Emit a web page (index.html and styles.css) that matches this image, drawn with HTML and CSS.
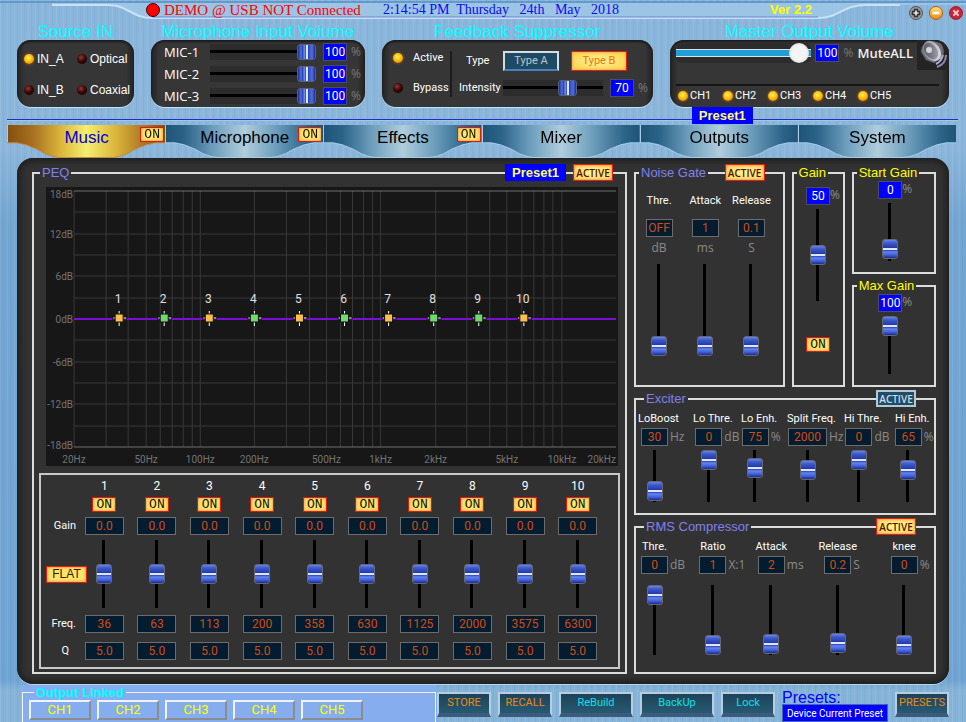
FILE: index.html
```html
<!DOCTYPE html>
<html lang="en">
<head>
    <meta charset="UTF-8">
    <meta name="viewport" content="width=device-width, initial-scale=1.0">
    <title>Audio Processor</title>
    <link rel="stylesheet" href="styles.css">
</head>
<body>
    <header class="topbar">
        <svg class="topbar-shape" viewBox="0 0 966 23" preserveAspectRatio="none" aria-hidden="true">
            <path d="M0 2H966" stroke="#3f7dbb" stroke-width="1"/>
            <path d="M52 5H108C128 5 132 17 152 17H818C840 17 842 5 866 5H966V3H52Z" fill="#9cc4e4"/>
            <path d="M52 5H108C128 5 132 18 152 18H818C840 18 842 5 866 5H900" fill="none" stroke="#c9e2f6" stroke-width="2"/>
            <path d="M152 17H818" stroke="#6a86d8" stroke-width="1"/>
        </svg>
        <span class="status-dot"></span>
        <span class="status">DEMO @ USB NOT Connected</span>
        <time class="clock">2:14:54 PM&nbsp; Thursday&nbsp;&nbsp; 24th&nbsp;&nbsp; May&nbsp;&nbsp; 2018</time>
        <span class="version">Ver 2.2</span>
        <div class="window-buttons">
            <button class="win win-max" aria-label="Maximize"><svg viewBox="0 0 14 14"><path d="M7 2V12M2 7H12" stroke="#333" stroke-width="5"/><path d="M7 4V10M4 7H10" stroke="#e8e8e8" stroke-width="2"/></svg></button>
            <button class="win win-min" aria-label="Minimize"><svg viewBox="0 0 14 14"><path d="M3 7H11" stroke="#fff" stroke-width="3"/></svg></button>
            <button class="win win-close" aria-label="Close"><svg viewBox="0 0 14 14"><path d="M4 4L10 10M10 4L4 10" stroke="#f4d0d0" stroke-width="2"/></svg></button>
        </div>
    </header>

    <div class="inputs">
        <section class="group">
            <h2>Source IN</h2>
            <div class="box source">
                <label><input type="radio" class="led" name="source" checked>IN_A</label>
                <label><input type="radio" class="led" name="source">Optical</label>
                <label><input type="radio" class="led" name="source">IN_B</label>
                <label><input type="radio" class="led" name="source">Coaxial</label>
            </div>
        </section>

        <section class="group">
            <h2>Microphone Input Volume</h2>
            <div class="box mics">
                <div class="mic"><label for="mic1">MIC-1</label><input type="range" class="hslider" id="mic1" value="100"><input type="text" class="value blue" aria-label="MIC-1 volume" value="100"><span class="unit">%</span></div>
                <div class="mic"><label for="mic2">MIC-2</label><input type="range" class="hslider" id="mic2" value="100"><input type="text" class="value blue" aria-label="MIC-2 volume" value="100"><span class="unit">%</span></div>
                <div class="mic"><label for="mic3">MIC-3</label><input type="range" class="hslider" id="mic3" value="100"><input type="text" class="value blue" aria-label="MIC-3 volume" value="100"><span class="unit">%</span></div>
            </div>
        </section>

        <section class="group">
            <h2>Feedback Suppressor</h2>
            <div class="box feedback">
                <div class="modes">
                    <label><input type="radio" class="led" name="feedback" checked>Active</label>
                    <label><input type="radio" class="led" name="feedback">Bypass</label>
                </div>
                <div class="feedback-settings">
                    <span>Type</span>
                    <div class="types">
                        <button class="btn">Type A</button>
                        <button class="btn lit">Type B</button>
                    </div>
                    <label for="intensity">Intensity</label>
                    <div class="intensity"><input type="range" class="hslider" id="intensity" value="68"><input type="text" class="value blue" aria-label="Intensity value" value="70"><span class="unit">%</span></div>
                </div>
            </div>
        </section>

        <section class="group">
            <h2>Master Output Volume</h2>
            <div class="box master">
                <div class="master-row">
                    <input type="range" class="master-slider" aria-label="Master volume" value="98">
                    <input type="text" class="value blue" aria-label="Master volume value" value="100">
                    <span class="unit">%</span>
                    <button class="mute">MuteALL
                        <svg viewBox="0 0 30 30" aria-hidden="true">
                            <defs>
                                <linearGradient id="cone" x1="0" y1="0" x2="1" y2="1">
                                    <stop offset="0" stop-color="#4c4c54"/>
                                    <stop offset="1" stop-color="#a8a8b4"/>
                                </linearGradient>
                                <linearGradient id="rim" x1="0" y1="0" x2="1" y2="1">
                                    <stop offset="0" stop-color="#77777f"/>
                                    <stop offset="1" stop-color="#ececf4"/>
                                </linearGradient>
                            </defs>
                            <path d="M3 12C3 5 8 1 15 1L22 3C26 7 27 13 24 18L16 23L8 20Z" fill="#6e6e76"/>
                            <ellipse cx="14" cy="11" rx="8" ry="11" transform="rotate(-35 14 11)" fill="url(#rim)"/>
                            <ellipse cx="13" cy="11" rx="6" ry="9" transform="rotate(-35 13 11)" fill="url(#cone)"/>
                            <circle cx="11" cy="10" r="3" fill="#d4d4de"/>
                            <path d="M18 24C22 22 24 19 25 15" fill="none" stroke="#b4acd4" stroke-width="2"/>
                            <path d="M19 27C25 25 28 21 28 15" fill="none" stroke="#8e84b8" stroke-width="2"/>
                        </svg>
                    </button>
                </div>
                <div class="channels">
                    <label><input type="checkbox" class="led" checked>CH1</label>
                    <label><input type="checkbox" class="led" checked>CH2</label>
                    <label><input type="checkbox" class="led" checked>CH3</label>
                    <label><input type="checkbox" class="led" checked>CH4</label>
                    <label><input type="checkbox" class="led" checked>CH5</label>
                </div>
            </div>
        </section>
    </div>

    <div class="rule"><span class="preset-tag">Preset1</span></div>

    <nav class="tabs">
        <div class="tab current"><a href="#music">Music</a><button class="on">ON</button></div>
        <div class="tab"><a href="#microphone">Microphone</a><button class="on">ON</button></div>
        <div class="tab"><a href="#effects">Effects</a><button class="on">ON</button></div>
        <div class="tab"><a href="#mixer">Mixer</a></div>
        <div class="tab"><a href="#outputs">Outputs</a></div>
        <div class="tab"><a href="#system">System</a></div>
    </nav>

    <main class="panel">
        <fieldset class="peq">
            <legend>PEQ</legend>
            <div class="corner"><span class="preset-tag">Preset1</span><button class="active">ACTIVE</button></div>
            <svg class="graph" id="graph" viewBox="0 0 571 279" preserveAspectRatio="none" role="img" aria-label="Equalizer response"></svg>
            <div class="bands" id="bands">
                <div class="band-labels">
                    <span></span>
                    <span></span>
                    <span>Gain</span>
                    <button class="flat">FLAT</button>
                    <span>Freq.</span>
                    <span class="q">Q</span>
                </div>
            </div>
        </fieldset>

        <div class="dynamics">
            <div class="upper">
                <fieldset class="gate">
                    <legend>Noise Gate</legend>
                    <div class="corner"><button class="active">ACTIVE</button></div>
                    <div class="gate-col"><label for="ng-thre">Thre.</label><input type="text" class="value" id="ng-thre" value="OFF"><span class="unit">dB</span><input type="range" class="vslider long" aria-label="Gate threshold" value="0"></div>
                    <div class="gate-col"><label for="ng-attack">Attack</label><input type="text" class="value" id="ng-attack" value="1"><span class="unit">ms</span><input type="range" class="vslider long" aria-label="Gate attack" value="0"></div>
                    <div class="gate-col"><label for="ng-release">Release</label><input type="text" class="value" id="ng-release" value="0.1"><span class="unit">S</span><input type="range" class="vslider long" aria-label="Gate release" value="0"></div>
                </fieldset>
                <fieldset class="gain">
                    <legend>Gain</legend>
                    <div class="level"><input type="text" class="value blue" aria-label="Gain" value="50"><span class="unit">%</span></div>
                    <input type="range" class="vslider long" aria-label="Gain slider" value="50">
                    <button class="on">ON</button>
                </fieldset>
                <div class="gain-pair">
                    <fieldset class="gain">
                        <legend>Start Gain</legend>
                        <div class="level"><input type="text" class="value blue" aria-label="Start gain" value="0"><span class="unit">%</span></div>
                        <input type="range" class="vslider" aria-label="Start gain slider" value="4">
                    </fieldset>
                    <fieldset class="gain">
                        <legend>Max Gain</legend>
                        <div class="level"><input type="text" class="value blue" aria-label="Max gain" value="100"><span class="unit">%</span></div>
                        <input type="range" class="vslider" aria-label="Max gain slider" value="100">
                    </fieldset>
                </div>
            </div>

            <fieldset class="exciter">
                <legend>Exciter</legend>
                <div class="corner"><button class="active off">ACTIVE</button></div>
                <div class="knob"><label for="ex-boost">LoBoost</label><input type="text" class="value" id="ex-boost" value="30"><span class="unit">Hz</span><input type="range" class="vslider" aria-label="LoBoost slider" value="4"></div>
                <div class="knob"><label for="ex-lothre">Lo Thre.</label><input type="text" class="value" id="ex-lothre" value="0"><span class="unit">dB</span><input type="range" class="vslider" aria-label="Lo threshold slider" value="100"></div>
                <div class="knob"><label for="ex-loenh">Lo Enh.</label><input type="text" class="value" id="ex-loenh" value="75"><span class="unit">%</span><input type="range" class="vslider" aria-label="Lo enhance slider" value="75"></div>
                <div class="knob wide"><label for="ex-split">Split Freq.</label><input type="text" class="value" id="ex-split" value="2000"><span class="unit">Hz</span><input type="range" class="vslider" aria-label="Split frequency slider" value="68"></div>
                <div class="knob"><label for="ex-hithre">Hi Thre.</label><input type="text" class="value" id="ex-hithre" value="0"><span class="unit">dB</span><input type="range" class="vslider" aria-label="Hi threshold slider" value="100"></div>
                <div class="knob"><label for="ex-hienh">Hi Enh.</label><input type="text" class="value" id="ex-hienh" value="65"><span class="unit">%</span><input type="range" class="vslider" aria-label="Hi enhance slider" value="67"></div>
            </fieldset>

            <fieldset class="compressor">
                <legend>RMS Compressor</legend>
                <div class="corner"><button class="active">ACTIVE</button></div>
                <div class="knob"><label for="rc-thre">Thre.</label><input type="text" class="value" id="rc-thre" value="0"><span class="unit">dB</span><input type="range" class="vslider" aria-label="Compressor threshold slider" value="100"></div>
                <div class="knob"><label for="rc-ratio">Ratio</label><input type="text" class="value" id="rc-ratio" value="1"><span class="unit">X:1</span><input type="range" class="vslider" aria-label="Ratio slider" value="0"></div>
                <div class="knob"><label for="rc-attack">Attack</label><input type="text" class="value" id="rc-attack" value="2"><span class="unit">ms</span><input type="range" class="vslider" aria-label="Compressor attack slider" value="2"></div>
                <div class="knob"><label for="rc-release">Release</label><input type="text" class="value" id="rc-release" value="0.2"><span class="unit">S</span><input type="range" class="vslider" aria-label="Compressor release slider" value="4"></div>
                <div class="knob"><label for="rc-knee">knee</label><input type="text" class="value" id="rc-knee" value="0"><span class="unit">%</span><input type="range" class="vslider" aria-label="Knee slider" value="0"></div>
            </fieldset>
        </div>
    </main>

    <footer class="footer">
        <div class="linked-area">
            <fieldset class="linked">
                <legend>Output Linked</legend>
                <button>CH1</button>
                <button>CH2</button>
                <button>CH3</button>
                <button>CH4</button>
                <button>CH5</button>
            </fieldset>
        </div>
        <div class="actions">
            <button class="btn deep orange">STORE</button>
            <button class="btn deep orange">RECALL</button>
            <button class="btn deep cyan large">ReBuild</button>
            <button class="btn deep cyan large">BackUp</button>
            <button class="btn deep cyan">Lock</button>
            <div class="presets">
                <label for="preset">Presets:</label>
                <input type="text" id="preset" value="Device Current Preset">
            </div>
            <button class="btn deep orange">PRESETS</button>
        </div>
    </footer>

    <script>
        const freqs = [36, 63, 113, 200, 358, 630, 1125, 2000, 3575, 6300];
        const nodeColors = ['#ffc04a', '#6fdc6a', '#ffc04a', '#6fdc6a', '#ffc04a', '#6fdc6a', '#ffc04a', '#6fdc6a', '#6fdc6a', '#ffc04a'];

        // Equalizer bands
        const bands = document.getElementById('bands');
        freqs.forEach((freq, i) => {
            const n = i + 1;
            const band = document.createElement('div');
            band.className = 'band';
            band.innerHTML = `
                <span>${n}</span>
                <button class="on">ON</button>
                <input type="text" class="value" aria-label="Band ${n} gain" value="0.0">
                <input type="range" class="vslider" aria-label="Band ${n} gain slider" value="50">
                <input type="text" class="value" aria-label="Band ${n} frequency" value="${freq}">
                <input type="text" class="value" aria-label="Band ${n} Q" value="5.0">
            `;
            bands.appendChild(band);
        });

        // Graph: log frequency from 20 Hz to 20 kHz, gain from -18 to 18 dB
        const left = 28, right = 569, top_ = 4, bottom = 260;
        const xOf = f => Math.round(left + (right - left) * Math.log10(f / 20) / 3);
        const yOf = db => Math.round(top_ + (bottom - top_) * (18 - db) / 36);
        let svg = '';
        for (let db = -15; db <= 15; db += 3) {
            svg += `<path class="grid-line" d="M${left} ${yOf(db)}H${right}"/>`;
        }
        for (let decade = 10; decade <= 10000; decade *= 10) {
            for (let k = 1; k < 10; k++) {
                const f = decade * k;
                if (f >= 20 && f <= 10000) {
                    svg += `<path class="grid-line" d="M${xOf(f)} ${top_}V${bottom}"/>`;
                }
            }
        }
        svg += `<path class="edge" d="M${left} ${top_}H${right}M${left} ${bottom}H${right}"/>`;
        svg += `<path class="curve" d="M${left} 132H${right}"/>`;
        for (let db = -18; db <= 18; db += 6) {
            const y = db === 18 ? 11 : yOf(db) + 4;
            svg += `<text class="axis" x="27" y="${db === -18 ? 262 : y}" text-anchor="end">${db}dB</text>`;
        }
        [[20, '20Hz'], [50, '50Hz'], [100, '100Hz'], [200, '200Hz'], [500, '500Hz'], [1000, '1kHz'], [2000, '2kHz'], [5000, '5kHz'], [10000, '10kHz']].forEach(([f, text]) => {
            svg += `<text class="axis" x="${xOf(f)}" y="276" text-anchor="middle">${text}</text>`;
        });
        svg += `<text class="axis" x="${right}" y="276" text-anchor="end">20kHz</text>`;
        nodeColors.forEach((color, i) => {
            const x = 73 + Math.round(i * 44.9);
            svg += `<path d="M${x - 7} 131H${x + 8}" stroke="#111" stroke-width="3"/>
                <path d="M${x - 6} 131H${x + 7}M${x} 124V139" stroke="#fff" stroke-width="1"/>
                <rect x="${x - 4}" y="127" width="8" height="8" fill="${color}" stroke="#111"/>
                <text class="node" x="${x - 1}" y="116" text-anchor="middle">${i + 1}</text>`;
        });
        document.getElementById('graph').innerHTML = svg;
    </script>
</body>
</html>
```
FILE: styles.css
```css
* {
    box-sizing: border-box;
}
body {
    margin: 0;
    min-height: 100vh;
    display: flex;
    flex-direction: column;
    font-family: Roboto, "Liberation Sans", sans-serif;
    font-size: 11px;
    line-height: 14px;
    color: #fff;
    background-color: #79a8d2;
    background-image:
        repeating-linear-gradient(90deg, rgba(255, 255, 255, 0.07) 0 1px, transparent 1px 3px, rgba(30, 80, 130, 0.06) 3px 4px, transparent 4px 7px),
        linear-gradient(180deg, #8ab6dc 0, #8cb6da 150px, #74a6d2 220px, #70a4d2 680px, #86b4d8 690px);
}
button, input {
    font-family: inherit;
    font-size: inherit;
    line-height: 14px;
    margin: 0;
    padding: 0;
    border: 0;
}
button {
    cursor: pointer;
}

/* Top bar */
.topbar {
    position: relative;
    display: flex;
    align-items: center;
    height: 23px;
    padding: 0 3px 3px 146px;
}
.topbar > * {
    position: relative;
}
.topbar .topbar-shape {
    position: absolute;
    inset: 0;
    width: 100%;
    height: 100%;
}
.status-dot {
    width: 14px;
    height: 14px;
    border: 1px solid #400;
    border-radius: 50%;
    background: #f00;
}
.status {
    margin-left: 4px;
    font: 15px/20px "Liberation Serif", serif;
    color: #f00;
}
.clock {
    margin-left: 22px;
    font: 14px/18px "Liberation Serif", serif;
    color: #0b0bf0;
}
.version {
    margin-left: auto;
    font: bold 13px/16px "Liberation Sans", sans-serif;
    color: #ff0;
}
.window-buttons {
    display: flex;
    gap: 6px;
    margin-left: 97px;
    padding-top: 6px;
}
.win {
    display: flex;
    width: 14px;
    height: 14px;
    border-radius: 50%;
    border: 1px solid #555;
}
.win svg {
    width: 100%;
    height: 100%;
}
.win-max {
    background: #999;
}
.win-min {
    background: linear-gradient(#ffe070, #f08a10);
    border-color: #b05a20;
}
.win-close {
    background: radial-gradient(#d04050, #c01020);
    border-color: #a02030;
}

/* Input and output groups */
.inputs {
    display: grid;
    grid-template-columns: 117fr 214fr 271fr 279fr;
    gap: 17px;
    margin: 0 17px;
}
.group {
    min-width: 0;
}
.group h2 {
    margin: 0;
    font: 17px/17px "Liberation Sans", sans-serif;
    text-align: center;
    color: #0ff;
    white-space: nowrap;
}
.box {
    height: 67px;
    border-radius: 14px;
    background: linear-gradient(90deg, #222 0, #363636 8px, #363636 calc(100% - 8px), #222 100%);
    box-shadow: 0 1px 0 #c4e0f4, inset 0 2px 2px #1c1c1c;
}
.led {
    appearance: none;
    flex: none;
    width: 10px;
    height: 10px;
    border-radius: 50%;
    background: radial-gradient(circle at 40% 35%, #8c3a34 0, #3c0805 45%, #120000 80%);
}
.led:checked {
    background: radial-gradient(circle at 45% 40%, #fff06a 0, #f8b800 50%, #c06000 100%);
    box-shadow: 0 0 3px #d05a10;
}
.source {
    display: grid;
    grid-template-columns: 53fr 55fr;
    align-items: center;
    padding: 4px 2px 2px 7px;
    font: 12px/16px "Liberation Sans", sans-serif;
}
.source label, .modes label, .channels label {
    display: flex;
    align-items: center;
    gap: 3px;
    min-width: 0;
    white-space: nowrap;
}
.mics {
    display: flex;
    flex-direction: column;
    justify-content: space-between;
    padding: 3px 4px 2px 13px;
}
.mic {
    display: flex;
    align-items: center;
    height: 18px;
}
.mic label {
    width: 46px;
    font: 13px/16px "Open Sans", sans-serif;
}
.hslider, .master-slider {
    flex: 1;
    min-width: 0;
}
.mic .value, .intensity .value {
    margin-left: 7px;
}
.unit {
    font: 12px/16px "Open Sans", "Noto Sans", sans-serif;
    color: #8a8a8a;
    white-space: nowrap;
}
.box .unit {
    margin-left: 4px;
    color: #777;
}
.feedback {
    display: flex;
    align-items: center;
    padding: 0 5px 0 11px;
}
.modes {
    display: flex;
    flex-direction: column;
    flex: none;
    gap: 16px;
    width: 59px;
    height: 46px;
    border-right: 2px solid #1c1c1c;
}
.modes label {
    gap: 10px;
}
.feedback-settings {
    flex: 1;
    display: grid;
    grid-template-columns: 44px 1fr;
    row-gap: 8px;
    align-items: center;
    min-width: 0;
    padding-left: 7px;
}
.feedback-settings > span {
    padding-left: 7px;
}
.types {
    display: flex;
    gap: 12px;
}
.intensity {
    display: flex;
    align-items: center;
    min-width: 0;
}
.master {
    padding: 0 0 0 6px;
    overflow: hidden;
}
.master-row {
    display: flex;
    align-items: center;
    height: 30px;
    padding-bottom: 4px;
}
.master .value {
    margin-left: 4px;
}
.mute {
    display: flex;
    align-items: center;
    gap: 4px;
    margin-left: 4px;
    background: none;
    color: #f0f0f0;
    font: 600 13px/16px "Open Sans", sans-serif;
}
.mute svg {
    width: 32px;
    height: 30px;
    margin-top: 3px;
    background: #242424;
}
.channels {
    display: flex;
    gap: 10px;
    margin: 14px 10px 0 0;
    padding: 3px 2px;
    border-top: 2px solid #161616;
}
.channels label {
    width: 35px;
    gap: 2px;
}

/* Value fields */
.value {
    flex: none;
    width: 27px;
    height: 18px;
    text-align: center;
    font-size: 12px;
    color: #d04c10;
    background: #041c30;
    border: 1px solid #6c6c6c;
}
.value.blue {
    width: 24px;
    color: #fff;
    background: #00f;
    border-color: #4a4a6a;
}

/* Sliders */
.hslider, .vslider, .master-slider {
    appearance: none;
    background: none;
}
.hslider {
    height: 16px;
    background: linear-gradient(#2c2c2c 6px, #000 6px, #000 9px, #2c2c2c 9px);
}
.hslider::-webkit-slider-thumb {
    appearance: none;
    width: 19px;
    height: 16px;
    border: 1px solid #55617a;
    border-radius: 3px;
    background: linear-gradient(90deg, #1c2c90 0, #5070e0 3px, #2438a8 5px, #7ea0f8 6px, #2a40b4 8px, #dce6ff 8px, #dce6ff 10px, #2a40b4 10px, #5070e0 14px, #1c2c90 100%);
}
.vslider {
    writing-mode: vertical-lr;
    direction: rtl;
    width: 16px;
    height: 58px;
    background: linear-gradient(90deg, transparent 6px, #000 6px, #000 9px, transparent 9px);
}
.vslider.long {
    height: 92px;
}
.vslider::-webkit-slider-thumb {
    appearance: none;
    width: 16px;
    height: 20px;
    border: 1px solid #66686e;
    border-radius: 3px;
    background: linear-gradient(#6484f0 0, #3c58c8 3px, #2438a8 8px, #dce6ff 8px, #dce6ff 10px, #2a40b4 10px, #6484f0 12px, #4060d8 15px, #1c2c90 18px);
}
.master-slider {
    height: 20px;
    background: linear-gradient(#2c2c2c 6px, #d8e4ea 6px, #d8e4ea 7px, #1f9fd6 7px, #1f9fd6 13px, #d8e4ea 13px, #d8e4ea 14px, #2c2c2c 14px);
    border-radius: 6px;
}
.master-slider::-webkit-slider-thumb {
    appearance: none;
    width: 20px;
    height: 20px;
    border-radius: 50%;
    background: radial-gradient(#f4f4f4 50%, #c8c8c8 100%);
}

/* Buttons */
.btn {
    width: 56px;
    height: 20px;
    color: #b8c8d0;
    background: #1f4a63;
    border: 2px solid #d4dde6;
    border-bottom-color: #4a80c0;
}
.btn.lit {
    color: #e87808;
    background: radial-gradient(#fff2a0, #fcd850 80%);
    border: 1px solid #e02010;
    box-shadow: inset 0 0 3px #f08060;
}
.btn.deep {
    width: 54px;
    height: 25px;
    padding-bottom: 1px;
    border: 2px solid #b8cede;
    border-bottom: 4px solid #3c5a7c;
    background: linear-gradient(#1d425a, #275a72);
}
.btn.deep.large {
    width: 74px;
}
.btn.orange {
    color: #e88c14;
}
.btn.cyan {
    color: #10e0e8;
}
.on {
    width: 24px;
    height: 15px;
    font: 13px/12px "Liberation Mono", monospace;
    color: #141400;
    background: radial-gradient(#fff078, #fcd060);
    border: 1px solid #d02010;
    box-shadow: inset 0 0 2px #f06040;
}
.active {
    width: 40px;
    height: 17px;
    font: 600 10px/14px "Open Sans", sans-serif;
    color: #501000;
    background: radial-gradient(#fff490, #fcd860);
    border: 1px solid #e02010;
    box-shadow: inset 0 0 3px #f06040;
}
.active.off {
    color: #c8dce8;
    background: #204c66;
    border: 2px solid #b4c8d4;
    box-shadow: none;
}
.flat {
    width: 41px;
    height: 17px;
    font: 12px/14px "Liberation Sans", sans-serif;
    color: #302000;
    background: #fce468;
    border: 1px solid #e02010;
    box-shadow: inset 0 0 3px #f06040;
}
.preset-tag {
    width: 61px;
    height: 17px;
    font: bold 13px/17px "Liberation Sans", sans-serif;
    text-align: center;
    color: #ffff60;
    background: #00f;
}

/* Tabs */
.rule {
    position: relative;
    height: 18px;
    margin: 0 8px 0 7px;
    background: linear-gradient(transparent 12px, #1c30c8 12px, #1c30c8 13px, #a0c8ea 13px, #a0c8ea 14px, transparent 14px);
}
.rule .preset-tag {
    position: absolute;
    left: 72%;
    top: 0;
}
.tabs {
    display: flex;
    margin: 0 10px 0 7px;
}
.tab {
    position: relative;
    flex: 1;
    height: 33px;
    filter: drop-shadow(0 1px 0 #a4cce8);
}
.tab a {
    display: block;
    height: 32px;
    font: 17px/25px "Liberation Sans", sans-serif;
    text-align: center;
    text-decoration: none;
    color: #000;
    border-left: 1px solid #a8cce4;
    background: linear-gradient(90deg, #1d5478 0, #2c6488 12%, #6c9dbc 30%, #b0cddc 50%, #6c9dbc 70%, #2c6488 90%, #1d5478 100%);
    clip-path: polygon(0 0, 100% 0, 100% 54%, 94% 54%, 88% 60%, 81% 74%, 76% 88%, 71% 97%, 67% 100%, 33% 100%, 29% 97%, 24% 88%, 19% 74%, 12% 60%, 6% 54%, 0 54%);
}
.tab.current {
    filter: drop-shadow(0 1px 0 #c08848);
}
.tab.current a {
    color: #0000d0;
    background: linear-gradient(90deg, #84500e 0, #a87020 16%, #dcb83c 34%, #f4ee70 50%, #dcb83c 68%, #a87020 88%, #84500e 100%);
}
.tab .on {
    position: absolute;
    top: 2px;
    right: 1px;
}

/* Main panel */
.panel {
    flex: 1;
    display: grid;
    grid-template-columns: 595fr 302fr;
    gap: 7px;
    margin: 0 17px;
    padding: 7px 13px 10px 15px;
    border-radius: 16px;
    background: #323232;
    box-shadow: inset 0 0 6px 3px #1e1e1e, 0 1px 0 #b4d8f0;
}
fieldset {
    position: relative;
    min-width: 0;
    margin: 0;
    padding: 0;
    border: 2px solid #dcdcdc;
}
legend {
    margin-left: 3px;
    padding: 0 2px;
    font: 13px/16px "Liberation Sans", sans-serif;
    color: #8080f0;
    white-space: nowrap;
}
.corner {
    position: absolute;
    top: -17px;
    right: 12px;
    display: flex;
    gap: 7px;
}
.dynamics .corner {
    right: 18px;
}
.peq {
    padding: 6px 5px 3px;
}
.peq legend {
    margin-left: 1px;
}
.graph {
    display: block;
    width: calc(100% - 9px);
    height: 279px;
    margin-left: 7px;
    background: #171717;
}
.grid-line {
    stroke: #383838;
    stroke-width: 1;
}
.edge {
    stroke: #707070;
    stroke-width: 1;
}
.curve {
    stroke: #7a10d8;
    stroke-width: 2;
}
.axis {
    font-size: 10px;
    fill: #747474;
}
.node {
    font-size: 12px;
    fill: #e0e0e0;
}
.bands {
    display: grid;
    grid-template-columns: 32px repeat(10, 1fr);
    margin-top: 7px;
    padding: 5px 14px 5px 5px;
    border: 2px solid #c8c8c8;
}
.band, .band-labels {
    display: grid;
    grid-template-columns: 100%;
    grid-template-rows: 12px 15px 18px 68px 22px 22px;
    row-gap: 5px;
    justify-items: center;
    align-content: start;
    align-items: center;
    min-width: 0;
}
.band > span {
    font-size: 12px;
}
.band .value {
    width: 39px;
}
.band .vslider {
    height: 68px;
}
.band-labels {
    justify-items: end;
    padding-right: 2px;
}
.band-labels .flat {
    justify-self: start;
}
.band-labels .q {
    padding-right: 7px;
}

/* Dynamics column */
.dynamics {
    display: grid;
    grid-template-rows: 221fr 124fr 154fr;
    gap: 4px;
    min-width: 0;
}
.upper {
    display: grid;
    grid-template-columns: 150fr 53fr 84fr;
    gap: 7px;
}
.gate {
    display: grid;
    grid-template-columns: repeat(3, 1fr);
    align-content: start;
    padding: 13px 8px 0 0;
}
.gate-col {
    display: flex;
    flex-direction: column;
    align-items: center;
}
.gate-col .value {
    margin: 11px 0 3px;
}
.gate-col .vslider {
    margin-top: 8px;
}
.gain {
    display: flex;
    flex-direction: column;
    align-items: center;
}
.gain legend {
    color: #ff0;
}
.gain .level {
    display: flex;
    width: 24px;
    margin: 6px 0 4px;
}
.gain .on {
    margin-top: 36px;
}
.gain-pair {
    display: grid;
    grid-template-rows: 1fr 1fr;
    gap: 4px;
}
.gain-pair .gain {
    padding-right: 7px;
}
.gain-pair .gain .level {
    margin: 0 0 4px;
}
.exciter, .compressor {
    display: grid;
    align-content: start;
    padding: 5px 0 0 5px;
}
.exciter {
    grid-template-columns: 54fr 46fr 46fr 57fr 49fr 39fr;
}
.compressor {
    grid-template-columns: 58fr 58fr 66fr 66fr 43fr;
}
.knob {
    display: grid;
    grid-template-columns: 27px 1fr;
    align-items: center;
    min-width: 0;
}
.knob.wide {
    grid-template-columns: 39px 1fr;
}
.knob.wide .value {
    width: 39px;
}
.knob label {
    grid-column: 1;
    justify-self: center;
    white-space: nowrap;
    margin-bottom: 2px;
}
.knob .value {
    grid-column: 1;
}
.exciter .knob label {
    padding-left: 8px;
}
.knob .vslider {
    grid-column: 1;
    justify-self: center;
    height: 52px;
    margin-top: 4px;
}
.knob .unit {
    padding-left: 2px;
}
.compressor .knob .vslider {
    height: 70px;
    margin-top: 11px;
}

/* Footer */
.footer {
    display: flex;
    margin: 1px 17px 0 22px;
}
.linked-area {
    flex: 1;
    padding: 0 1px 1px 0;
    background: #86aeee;
}
.linked {
    display: flex;
    gap: 6px;
    padding: 0 6px 2px;
    border: 1px solid #f4f4f4;
}
.linked legend {
    margin-left: 5px;
    font: bold 13px/15px "Liberation Sans", sans-serif;
    color: #0ff;
}
.linked button {
    width: 62px;
    height: 20px;
    font-size: 13px;
    color: #ff0;
    background: #86aeee;
    border: 2px solid #f0f4ff;
    border-right-color: #8c8c8c;
    border-bottom-color: #8c8c8c;
}
.actions {
    display: flex;
    align-items: flex-start;
    gap: 7px;
    padding-top: 7px;
}
.presets {
    display: flex;
    flex-direction: column;
}
.presets label {
    font: 16px/12px "Liberation Sans", sans-serif;
    color: #00f;
}
.presets input {
    width: 106px;
    height: 18px;
    text-align: center;
    font-size: 10px;
    color: #fff;
    background: #00f;
    border: 1px solid #4468b0;
}
```
